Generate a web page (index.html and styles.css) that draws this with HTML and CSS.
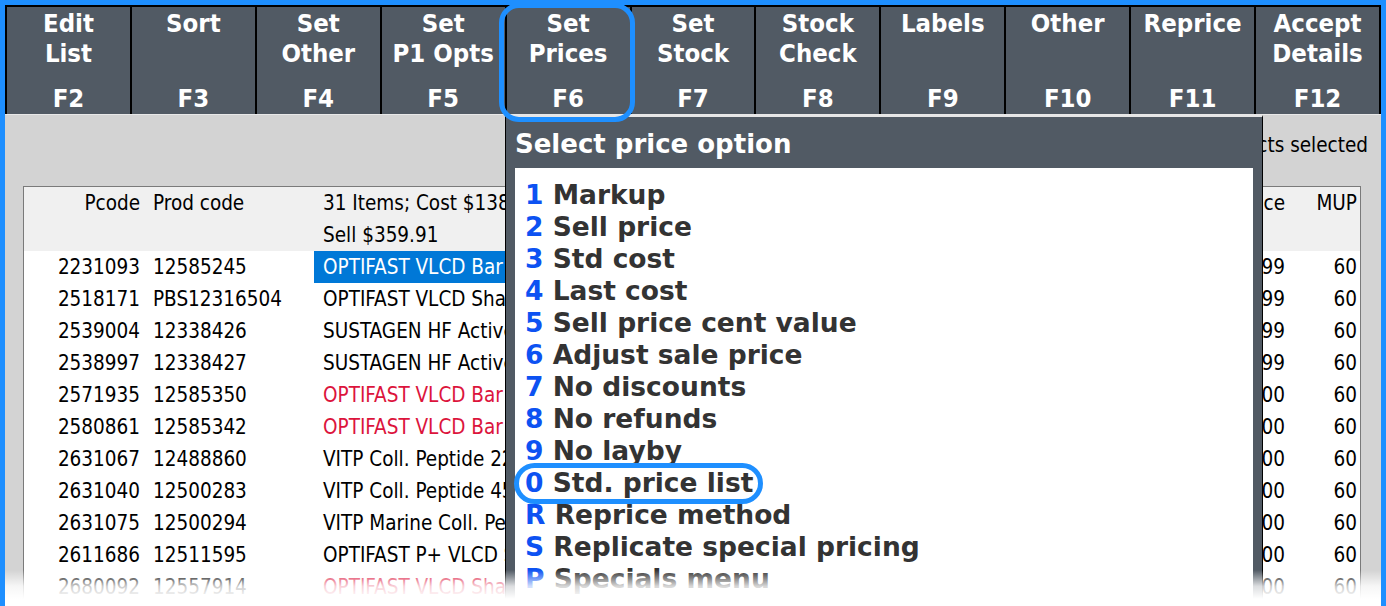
FILE: index.html
```html
<!DOCTYPE html>
<html>
<head>
<meta charset="utf-8">
<link rel="stylesheet" href="styles.css">
</head>
<body>
<div class="frame">
  <div class="toolbar">
    <div class="fkey"><div class="label">Edit<br>List</div><div class="key">F2</div></div>
    <div class="fkey"><div class="label">Sort</div><div class="key">F3</div></div>
    <div class="fkey"><div class="label">Set<br>Other</div><div class="key">F4</div></div>
    <div class="fkey"><div class="label">Set<br>P1 Opts</div><div class="key">F5</div></div>
    <div class="fkey active"><div class="label">Set<br>Prices</div><div class="key">F6</div></div>
    <div class="fkey"><div class="label">Set<br>Stock</div><div class="key">F7</div></div>
    <div class="fkey"><div class="label">Stock<br>Check</div><div class="key">F8</div></div>
    <div class="fkey"><div class="label">Labels</div><div class="key">F9</div></div>
    <div class="fkey"><div class="label">Other</div><div class="key">F10</div></div>
    <div class="fkey"><div class="label">Reprice</div><div class="key">F11</div></div>
    <div class="fkey"><div class="label">Accept<br>Details</div><div class="key">F12</div></div>
  </div>

  <div class="workarea">
    <div class="status">1 of 31 products selected</div>
    <div class="table">
      <div class="row head">
        <div class="c num">Pcode</div>
        <div class="c code">Prod code</div>
        <div class="c desc">31 Items; Cost $138.24<br>Sell $359.91</div>
        <div class="c price">Price</div>
        <div class="c mup">MUP</div>
      </div>
      <div class="row sel"><div class="c num">2231093</div><div class="c code">12585245</div><div class="c desc">OPTIFAST VLCD Bar Choc 6x</div><div class="c price">9.99</div><div class="c mup">60</div></div>
      <div class="row"><div class="c num">2518171</div><div class="c code">PBS12316504</div><div class="c desc">OPTIFAST VLCD Shake Choc</div><div class="c price">9.99</div><div class="c mup">60</div></div>
      <div class="row"><div class="c num">2539004</div><div class="c code">12338426</div><div class="c desc">SUSTAGEN HF Active Choc</div><div class="c price">9.99</div><div class="c mup">60</div></div>
      <div class="row"><div class="c num">2538997</div><div class="c code">12338427</div><div class="c desc">SUSTAGEN HF Active Van</div><div class="c price">9.99</div><div class="c mup">60</div></div>
      <div class="row red"><div class="c num">2571935</div><div class="c code">12585350</div><div class="c desc">OPTIFAST VLCD Bar Caramel</div><div class="c price">9.00</div><div class="c mup">60</div></div>
      <div class="row red"><div class="c num">2580861</div><div class="c code">12585342</div><div class="c desc">OPTIFAST VLCD Bar Berry</div><div class="c price">9.00</div><div class="c mup">60</div></div>
      <div class="row"><div class="c num">2631067</div><div class="c code">12488860</div><div class="c desc">VITP Coll. Peptide 225g</div><div class="c price">9.00</div><div class="c mup">60</div></div>
      <div class="row"><div class="c num">2631040</div><div class="c code">12500283</div><div class="c desc">VITP Coll. Peptide 450g</div><div class="c price">9.00</div><div class="c mup">60</div></div>
      <div class="row"><div class="c num">2631075</div><div class="c code">12500294</div><div class="c desc">VITP Marine Coll. Peptide</div><div class="c price">9.00</div><div class="c mup">60</div></div>
      <div class="row"><div class="c num">2611686</div><div class="c code">12511595</div><div class="c desc">OPTIFAST P+ VLCD Shake</div><div class="c price">9.00</div><div class="c mup">60</div></div>
      <div class="row red"><div class="c num">2680092</div><div class="c code">12557914</div><div class="c desc">OPTIFAST VLCD Shake Van</div><div class="c price">9.00</div><div class="c mup">60</div></div>
    </div>
  </div>

  <div class="popup">
    <div class="popup-title">Select price option</div>
    <div class="popup-body">
      <div class="opt"><span class="n">1</span> Markup</div>
      <div class="opt"><span class="n">2</span> Sell price</div>
      <div class="opt"><span class="n">3</span> Std cost</div>
      <div class="opt"><span class="n">4</span> Last cost</div>
      <div class="opt"><span class="n">5</span> Sell price cent value</div>
      <div class="opt"><span class="n">6</span> Adjust sale price</div>
      <div class="opt"><span class="n">7</span> No discounts</div>
      <div class="opt"><span class="n">8</span> No refunds</div>
      <div class="opt"><span class="n">9</span> No layby</div>
      <div class="opt"><span class="ring"><span class="n">0</span> Std. price list</span></div>
      <div class="opt"><span class="n">R</span> Reprice method</div>
      <div class="opt"><span class="n">S</span> Replicate special pricing</div>
      <div class="opt"><span class="n">P</span> Specials menu</div>
      <div class="opt"><span class="n">Q</span> Quantity break pricing</div>
    </div>
  </div>

  <div class="fade"></div>
</div>
</body>
</html>
```

FILE: styles.css
```css
* { box-sizing: border-box; }
html, body { margin: 0; padding: 0; background: #ffffff; }
body {
  font-family: "DejaVu Sans Condensed", "DejaVu Sans", sans-serif;
  font-stretch: condensed;
  width: 1386px;
  height: 606px;
  overflow: hidden;
}
.frame {
  position: relative;
  width: 1386px;
  height: 606px;
  border: 5px solid #1e8fff;
  border-bottom: none;
  background: #d3d3d3;
  overflow: hidden;
}
.toolbar {
  display: flex;
  height: 109px;
  background: #515a64;
  border-top: 2px solid #000;
  border-left: 2px solid #000;
}
.fkey {
  position: relative;
  flex: 1 1 0;
  border-right: 2px solid #000;
  display: flex;
  flex-direction: column;
  align-items: center;
  color: #ffffff;
  font-weight: bold;
  font-size: 25.5px;
  line-height: 30px;
  text-align: center;
  padding: 1px 0 1px;
}
.fkey .key { margin-top: auto; }
.fkey.active::after {
  content: "";
  position: absolute;
  left: -8px;
  right: -5px;
  top: -4px;
  bottom: -8px;
  border: 5px solid #1e8fff;
  border-radius: 20px;
  z-index: 5;
}
.workarea {
  display: flex;
  flex-direction: column;
  padding: 0 20px 0 18px;
  border-top: 1px solid #e8e8e8;
}
.status {
  height: 71px;
  padding-top: 14px;
  text-align: right;
  font-size: 20.5px;
  line-height: 32px;
  color: #000;
  margin-right: -7px;
}
.table {
  background: #ffffff;
  border: 1px solid #7a7a7a;
  border-bottom: none;
  height: 440px;
}
.row {
  display: grid;
  grid-template-columns: 121px 169px 1fr 100px 70px;
  font-size: 20.5px;
  line-height: 32px;
  color: #000;
}
.row.head { background: #f0f0f0; }
.row.red .desc { color: #dc143c; }
.c { white-space: nowrap; overflow: hidden; }
.num { text-align: right; padding-right: 5px; }
.code { padding-left: 8px; }
.desc { padding-left: 9px; }
.price { text-align: right; padding-right: 5px; }
.mup { text-align: right; padding-right: 3px; }
.row.sel .desc { background: #0078d7; color: #ffffff; }
.popup {
  position: absolute;
  left: 500px;
  top: 110px;
  width: 758px;
  height: 520px;
  background: #515a64;
  border: 1px solid #000;
  border-top: 2px solid #e6e6e6;
  padding: 0 9px 0 9px;
  z-index: 3;
  font-family: "DejaVu Sans", sans-serif;
  font-stretch: normal;
}
.popup-title {
  height: 51px;
  padding: 2px 0 0 0;
  color: #ffffff;
  font-weight: bold;
  font-size: 26px;
  line-height: 50px;
}
.popup-body {
  background: #ffffff;
  height: 480px;
  padding: 11px 0 0 10px;
}
.opt {
  font-weight: bold;
  font-size: 26.5px;
  line-height: 32px;
  color: #333333;
  white-space: nowrap;
}
.opt .n { color: #0d52f2; }
.ring { position: relative; }
.ring::before {
  content: "";
  position: absolute;
  left: -11px;
  right: -10px;
  top: -4px;
  bottom: -6px;
  border: 5px solid #1e8fff;
  border-radius: 22px;
}
.fade {
  position: absolute;
  left: -5px;
  right: -5px;
  bottom: 0;
  height: 36px;
  background: linear-gradient(to bottom, rgba(255,255,255,0) 0%, rgba(255,255,255,0.8) 45%, #ffffff 80%);
  z-index: 10;
}
```
